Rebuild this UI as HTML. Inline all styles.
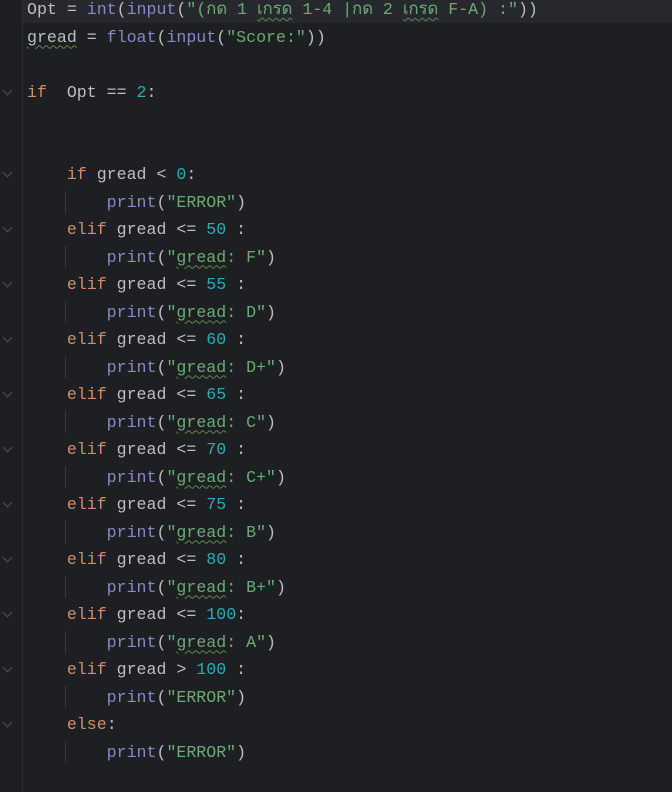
<!DOCTYPE html>
<html><head><meta charset="utf-8"><style>
html,body{margin:0;padding:0;background:#1e1f22;width:672px;height:792px;overflow:hidden}
.gut{position:absolute;left:0;top:0;width:22px;height:792px;border-right:1px solid #2b2d30;background:#1e1f22}
.cur{position:absolute;left:0;top:-3px;width:672px;height:26px;background:#26282e}
.l{position:absolute;left:27px;height:27px;line-height:27px;white-space:pre;font-family:"Liberation Mono","DejaVu Sans Mono",monospace;font-size:16.6px;color:#bcbec4}
.k{color:#cf8e6d}.n{color:#2aacb8}.s{color:#6aab73}.f{color:#8888c6}.c{color:#56a8f5}
.w{text-decoration:underline wavy #5b8a4a;text-decoration-thickness:1px;text-underline-offset:3px}
.g{position:absolute;left:65px;width:1px;height:22px;background:#393b40}
.v{position:absolute;left:4px;width:6px;height:6px;border-right:1px solid #4e5157;border-bottom:1px solid #4e5157;transform:rotate(45deg)}
</style></head><body>
<div class="cur"></div>
<div class="gut"></div>
<div class="l" style="top:-4px">Opt = <span class="f">int</span>(<span class="f">input</span>(<span class="s">"(กด 1 <span class="w">เกรด</span> 1-4 |กด 2 <span class="w">เกรด</span> F-A) :"</span>))</div>
<div class="l" style="top:23.5px"><span class="w">gread</span> = <span class="f">float</span>(<span class="f">input</span>(<span class="s">"Score:"</span>))</div>
<div class="l" style="top:78.5px"><span class="k">if</span>  Opt == <span class="n">2</span>:</div>
<div class="l" style="top:161px">    <span class="k">if</span> gread &lt; <span class="n">0</span>:</div>
<div class="l" style="top:188.5px">        <span class="f">print</span>(<span class="s">"ERROR"</span>)</div>
<div class="l" style="top:216px">    <span class="k">elif</span> gread &lt;= <span class="n">50</span> :</div>
<div class="l" style="top:243.5px">        <span class="f">print</span>(<span class="s">"<span class="w">gread</span>: F"</span>)</div>
<div class="l" style="top:271px">    <span class="k">elif</span> gread &lt;= <span class="n">55</span> :</div>
<div class="l" style="top:298.5px">        <span class="f">print</span>(<span class="s">"<span class="w">gread</span>: D"</span>)</div>
<div class="l" style="top:326px">    <span class="k">elif</span> gread &lt;= <span class="n">60</span> :</div>
<div class="l" style="top:353.5px">        <span class="f">print</span>(<span class="s">"<span class="w">gread</span>: D+"</span>)</div>
<div class="l" style="top:381px">    <span class="k">elif</span> gread &lt;= <span class="n">65</span> :</div>
<div class="l" style="top:408.5px">        <span class="f">print</span>(<span class="s">"<span class="w">gread</span>: C"</span>)</div>
<div class="l" style="top:436px">    <span class="k">elif</span> gread &lt;= <span class="n">70</span> :</div>
<div class="l" style="top:463.5px">        <span class="f">print</span>(<span class="s">"<span class="w">gread</span>: C+"</span>)</div>
<div class="l" style="top:491px">    <span class="k">elif</span> gread &lt;= <span class="n">75</span> :</div>
<div class="l" style="top:518.5px">        <span class="f">print</span>(<span class="s">"<span class="w">gread</span>: B"</span>)</div>
<div class="l" style="top:546px">    <span class="k">elif</span> gread &lt;= <span class="n">80</span> :</div>
<div class="l" style="top:573.5px">        <span class="f">print</span>(<span class="s">"<span class="w">gread</span>: B+"</span>)</div>
<div class="l" style="top:601px">    <span class="k">elif</span> gread &lt;= <span class="n">100</span>:</div>
<div class="l" style="top:628.5px">        <span class="f">print</span>(<span class="s">"<span class="w">gread</span>: A"</span>)</div>
<div class="l" style="top:656px">    <span class="k">elif</span> gread &gt; <span class="n">100</span> :</div>
<div class="l" style="top:683.5px">        <span class="f">print</span>(<span class="s">"ERROR"</span>)</div>
<div class="l" style="top:711px">    <span class="k">else</span>:</div>
<div class="l" style="top:738.5px">        <span class="f">print</span>(<span class="s">"ERROR"</span>)</div>
<div class="g" style="top:191px"></div><div class="g" style="top:246px"></div><div class="g" style="top:301px"></div><div class="g" style="top:356px"></div><div class="g" style="top:411px"></div><div class="g" style="top:466px"></div><div class="g" style="top:521px"></div><div class="g" style="top:576px"></div><div class="g" style="top:631px"></div><div class="g" style="top:686px"></div><div class="g" style="top:741px"></div>
<div class="v" style="top:87px"></div><div class="v" style="top:169px"></div><div class="v" style="top:224px"></div><div class="v" style="top:279px"></div><div class="v" style="top:334px"></div><div class="v" style="top:389px"></div><div class="v" style="top:444px"></div><div class="v" style="top:499px"></div><div class="v" style="top:554px"></div><div class="v" style="top:609px"></div><div class="v" style="top:664px"></div><div class="v" style="top:719px"></div>
</body></html>
